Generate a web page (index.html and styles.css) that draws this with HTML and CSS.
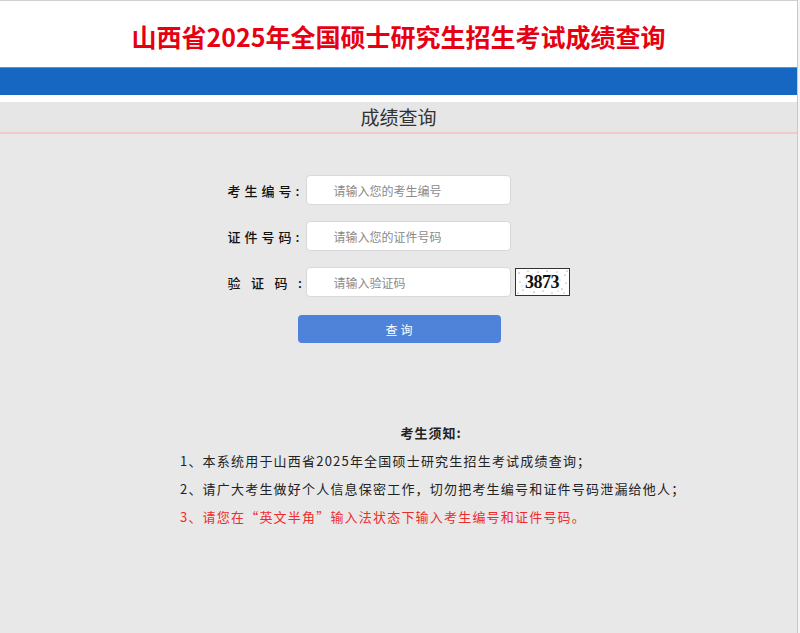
FILE: index.html
```html
<!DOCTYPE html>
<html lang="zh-CN">
<head>
<meta charset="utf-8">
<title>成绩查询</title>
<link rel="stylesheet" href="styles.css">
</head>
<body>
<div class="page">
  <header class="top">
    <h1 class="title">山西省2025年全国硕士研究生招生考试成绩查询</h1>
  </header>
  <div class="bar"></div>
  <div class="gap"></div>
  <div class="section-head">成绩查询</div>
  <main class="body">
    <form class="form">
      <div class="row">
        <label class="label">考生编号:</label>
        <input class="field" type="text" placeholder="请输入您的考生编号">
      </div>
      <div class="row">
        <label class="label">证件号码:</label>
        <input class="field" type="text" placeholder="请输入您的证件号码">
      </div>
      <div class="row">
        <label class="label label-wide">验证码:</label>
        <input class="field" type="text" placeholder="请输入验证码">
        <div class="captcha">
          <svg class="noise" width="53" height="26" viewBox="0 0 53 26">
            <g fill="#555">
              <circle cx="3" cy="4" r="0.6"/><circle cx="7" cy="21" r="0.5"/><circle cx="12" cy="2" r="0.5"/>
              <circle cx="4" cy="13" r="0.5"/><circle cx="18" cy="23" r="0.6"/><circle cx="22" cy="3" r="0.5"/>
              <circle cx="27" cy="22" r="0.5"/><circle cx="31" cy="2" r="0.6"/><circle cx="36" cy="24" r="0.5"/>
              <circle cx="41" cy="3" r="0.5"/><circle cx="46" cy="20" r="0.6"/><circle cx="49" cy="6" r="0.5"/>
              <circle cx="50" cy="14" r="0.5"/><circle cx="2" cy="24" r="0.5"/><circle cx="15" cy="12" r="0.4"/>
              <circle cx="44" cy="11" r="0.4"/><circle cx="9" cy="8" r="0.4"/><circle cx="38" cy="17" r="0.4"/>
              <circle cx="25" cy="9" r="0.4"/><circle cx="48" cy="24" r="0.5"/><circle cx="33" cy="13" r="0.4"/>
              <circle cx="20" cy="16" r="0.4"/><circle cx="51" cy="2" r="0.5"/><circle cx="6" cy="17" r="0.4"/>
              <circle cx="14" cy="19" r="0.4"/><circle cx="29" cy="17" r="0.4"/><circle cx="42" cy="22" r="0.4"/>
              <circle cx="10" cy="14" r="0.4"/><circle cx="35" cy="6" r="0.4"/><circle cx="17" cy="5" r="0.4"/>
            </g>
          </svg>
          <span class="code">3873</span>
        </div>
      </div>
      <button class="btn" type="button">查询</button>
    </form>

    <section class="notice">
      <h2 class="notice-title">考生须知:</h2>
      <p class="item">1、本系统用于山西省2025年全国硕士研究生招生考试成绩查询；</p>
      <p class="item">2、请广大考生做好个人信息保密工作，切勿把考生编号和证件号码泄漏给他人；</p>
      <p class="item item-red">3、请您在“英文半角”输入法状态下输入考生编号和证件号码。</p>
    </section>
  </main>
</div>
</body>
</html>
```

FILE: styles.css
```css
html, body {
  margin: 0;
  padding: 0;
  background: #f4f4f4;
  font-family: "Noto Sans CJK SC", "Noto Sans", sans-serif;
}

.page {
  width: 797px;
  height: 633px;
  border-right: 1px solid #c8c8c8;
  background: #e8e8e8;
  display: flex;
  flex-direction: column;
  overflow: hidden;
}

.top {
  height: 66px;
  background: #ffffff;
  border-top: 1px solid #d0d0d0;
  display: flex;
  align-items: center;
  justify-content: center;
}

.title {
  margin: 0;
  font-size: 25px;
  font-weight: bold;
  color: #e60012;
  line-height: 1;
  padding-top: 4px;
}

.bar {
  height: 27px;
  background: #1667c1;
  border-top: 1px solid #5a94d4;
}

.gap {
  height: 7px;
  background: #ffffff;
}

.section-head {
  height: 30px;
  line-height: 30px;
  background: #e6e6e6;
  text-align: center;
  font-size: 19px;
  color: #333333;
  border-bottom: 2px solid #f2c8ca;
}

.body {
  flex: 1;
  background: #e8e8e8;
}

.form {
  width: 342px;
  margin: 0 auto;
  padding-top: 41px;
  display: flex;
  flex-direction: column;
  gap: 16px;
}

.row {
  display: flex;
  align-items: center;
}

.label {
  width: 72px;
  flex: none;
  font-size: 13px;
  font-weight: 500;
  letter-spacing: 4px;
  color: #111111;
  white-space: nowrap;
}

.label-wide {
  letter-spacing: 10.5px;
}

.field {
  width: 205px;
  height: 30px;
  box-sizing: border-box;
  margin-left: 6px;
  border: 1px solid #d8d8d8;
  border-radius: 4px;
  background: #ffffff;
  padding: 0 0 0 27px;
  font-family: "Noto Sans CJK SC", "Noto Sans", sans-serif;
  font-size: 12px;
  color: #333;
  outline: none;
}

.field::placeholder {
  color: #8a8a8a;
}

.captcha {
  position: relative;
  width: 53px;
  height: 26px;
  margin-left: 4px;
  border: 1px solid #333333;
  background: #ffffff;
  display: flex;
  align-items: center;
  justify-content: center;
}

.noise {
  position: absolute;
  left: 0;
  top: 0;
}

.code {
  position: relative;
  font-family: "Liberation Serif", serif;
  font-weight: bold;
  font-size: 18px;
  color: #111111;
  letter-spacing: -0.5px;
}

.btn {
  width: 203px;
  height: 28px;
  margin-left: 70px;
  margin-top: 2px;
  border: none;
  border-radius: 4px;
  background: #4f82d9;
  color: #ffffff;
  font-family: "Noto Sans CJK SC", "Noto Sans", sans-serif;
  font-size: 12px;
  letter-spacing: 3px;
  padding: 0 0 0 3px;
}

.notice {
  width: 502px;
  margin: 76px 0 0 180px;
}

.notice-title {
  margin: 0;
  text-align: center;
  font-size: 13px;
  font-weight: bold;
  letter-spacing: 1px;
  line-height: 28px;
  color: #222222;
}

.item {
  margin: 0;
  font-size: 13px;
  letter-spacing: 1.2px;
  line-height: 28px;
  color: #222222;
  white-space: nowrap;
}

.item-red {
  color: #ee2b2b;
}
```
